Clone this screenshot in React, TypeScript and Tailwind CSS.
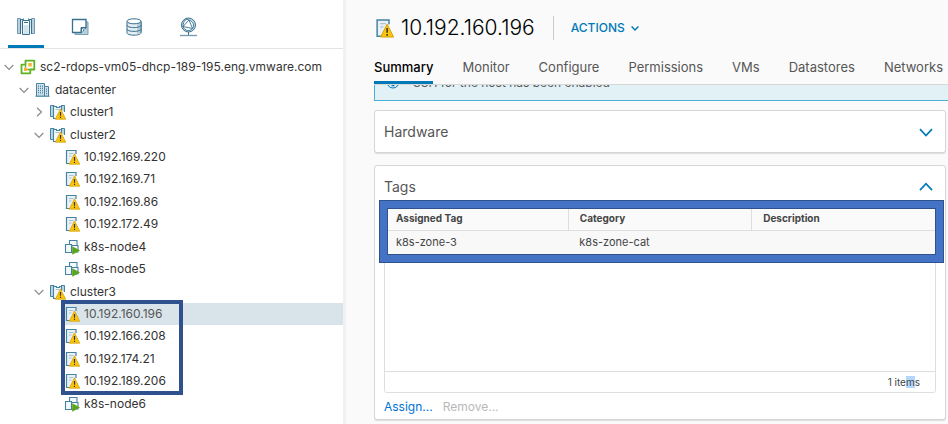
import type { ReactNode } from "react";

const BLUE = "#4583a3";

function Warning() {
  return (
    <g>
      <path d="M10.500 4.900 15.700 15.200H5.300Z" fill="#fdc60a" stroke="#d3a10c" strokeWidth="0.800" strokeLinejoin="round" />
      <path d="M10.500 8v3.700M10.500 12.700v1.400" stroke="#333" strokeWidth="1.200" />
    </g>
  );
}

function HostIcon({ className = "size-4" }: { className?: string }) {
  return (
    <svg viewBox="0 0 16 16" className={`${className} shrink-0`} fill="none" aria-hidden="true">
      <path d="M3 1h9v6l-4 7H3z" fill="#e9f1f5" />
      <path d="M12 5V1.500H2.500v13H6" stroke={BLUE} strokeWidth="1.200" />
      <path d="M5 4.500h4.500M5 7h2.500" stroke="#a9c3d1" />
      <Warning />
    </svg>
  );
}

function ClusterIcon() {
  return (
    <svg viewBox="0 0 16 16" className="size-4 shrink-0" fill="none" aria-hidden="true">
      <path d="M.500 1.500H4v11H.500z" fill="#bcd2dd" stroke={BLUE} />
      <path d="M11 1.500h3.500V8L11 6z" fill="#bcd2dd" />
      <path d="M11 1.500h3.500V8" stroke={BLUE} />
      <path d="M11.500 6V2.500h-2v1h-3v-1h-3v12H6" fill="#f3f8fa" stroke={BLUE} strokeWidth="1.100" />
      <path d="M5.500 5.500h4" stroke="#a9c3d1" />
      <Warning />
    </svg>
  );
}

function VmIcon() {
  return (
    <svg viewBox="0 0 16 16" className="size-4 shrink-0" fill="none" aria-hidden="true">
      <path d="M5.500 1.500h7.500v5.500H5.500z" fill="#f4f8fa" stroke={BLUE} strokeWidth="1.100" />
      <path d="M7.500 6.500h6.500V13H7.500z" fill="#f4f8fa" stroke={BLUE} strokeWidth="1.100" />
      <path d="M1.500 5.500h6v8h-6z" fill="#f4f8fa" stroke={BLUE} strokeWidth="1.100" />
      <path d="M8.200 7.200 16 11.500l-7.800 4.300z" fill="#5ba51b" />
    </svg>
  );
}

function VcenterIcon() {
  return (
    <svg viewBox="0 0 16 16" className="size-4 shrink-0" fill="none" aria-hidden="true">
      <path d="M5.500 1.700h8.800v8.800h-4v3.800H1.500V5.700h4z" fill="#fff" stroke="#5fb320" strokeWidth="1.800" strokeLinejoin="round" />
      <path d="M5.500 5.700v3M10.300 10.500h-3" stroke="#5fb320" strokeWidth="1.300" />
      <path d="M8.300 3.900h3.500v3.500H8.300zM4 8.700h3.300v3.300H4z" fill="#f9b233" />
    </svg>
  );
}

function DatacenterIcon() {
  return (
    <svg viewBox="0 0 16 16" className="size-4 shrink-0" fill="none" aria-hidden="true">
      <path d="M1.500 14V1.500h8V14" fill="#d3e2ea" stroke={BLUE} />
      <path d="M9.500 14V4.500h4V14" fill="#d3e2ea" stroke={BLUE} />
      <path d="M3.500 3.500v9M5.500 3.500v9M7.500 3.500v9" stroke={BLUE} strokeDasharray="1.300 0.900" />
      <path d="M11.500 6.500v6" stroke={BLUE} strokeDasharray="1.300 0.900" />
      <path d="M.500 14.200h14" stroke={BLUE} strokeWidth="1.200" />
    </svg>
  );
}

function Chevron({ dir, className = "", weight = 1.2 }: { dir: "down" | "right" | "up"; className?: string; weight?: number }) {
  const d = dir === "down" ? "M.7 3 5 7.500 9.300 3" : dir === "up" ? "M.7 7.200 5 2.700 9.300 7.200" : "M3 .7 7.500 5 3 9.300";
  return (
    <svg viewBox="0 0 10 10" className={`shrink-0 ${className}`} fill="none" stroke="currentColor" aria-hidden="true">
      <path d={d} strokeWidth={weight} />
    </svg>
  );
}

type Node = { label: string; level: 0 | 1 | 2 | 3; icon: ReactNode; open?: boolean; selected?: boolean };

const host = (label: string, selected = false): Node => ({ label, level: 3, icon: <HostIcon />, selected });
const vm = (label: string): Node => ({ label, level: 3, icon: <VmIcon /> });
const cluster = (label: string, open: boolean): Node => ({ label, level: 2, icon: <ClusterIcon />, open });

const nodes: Node[] = [
  { label: "sc2-rdops-vm05-dhcp-189-195.eng.vmware.com", level: 0, icon: <VcenterIcon />, open: true },
  { label: "datacenter", level: 1, icon: <DatacenterIcon />, open: true },
  cluster("cluster1", false),
  cluster("cluster2", true),
  host("10.192.169.220"),
  host("10.192.169.71"),
  host("10.192.169.86"),
  host("10.192.172.49"),
  vm("k8s-node4"),
  vm("k8s-node5"),
  cluster("cluster3", true),
  host("10.192.160.196", true),
  host("10.192.166.208"),
  host("10.192.174.21"),
  host("10.192.189.206"),
  vm("k8s-node6"),
];

const indent = ["ml-1", "ml-[19px]", "ml-[34px]", "ml-16"];

const views: { label: string; icon: ReactNode }[] = [
  {
    label: "Hosts and clusters",
    icon: (
      <svg viewBox="0 0 20 20" className="size-5 shrink-0" fill="none" stroke="#38708f" aria-hidden="true">
        <path d="M4.500 1.500h-3v15h3zM15.500 1.500h3v15h-3z" fill="#b9cfdb" stroke="#6f9ab1" />
        <path d="M4.500 17V2.500h3v-1M15.500 17V2.500h-3v-1" fill="#dce8ee" />
        <path d="M6.500 3.500h7v14h-7z" fill="#fff" />
        <path d="M8 5.500h4" />
        <path d="M7.500 8h5v9h-5z" fill="#d5e3ea" stroke="none" />
      </svg>
    ),
  },
  {
    label: "VMs and templates",
    icon: (
      <svg viewBox="0 0 20 20" className="size-5 shrink-0" fill="none" stroke="#38708f" aria-hidden="true">
        <path d="M5 15v2.500h13V5h-3" fill="#b9cfdb" stroke="#7a9fb4" />
        <path d="M2.500 2.500h13.500v8l-5 5H2.500z" fill="#fff" strokeWidth="1.300" />
        <path d="M16 10.500h-5v5z" fill="#38708f" />
        <path d="M12.500 14.500v-2.500h2.500" stroke="#fff" />
      </svg>
    ),
  },
  {
    label: "Storage",
    icon: (
      <svg viewBox="0 0 20 20" className="size-5 shrink-0" fill="none" stroke="#38708f" aria-hidden="true">
        <path d="M3 4.500v11.300c0 1.300 3 2.400 7 2.400s7-1.100 7-2.400V4.500" fill="#e3edf2" />
        <path d="M13 6.800v11l4-1.600V5z" fill="#b9cfdb" stroke="none" />
        <ellipse cx="10" cy="4.300" rx="7" ry="2.500" fill="#fff" />
        <path d="M3 8.200c0 1.300 3 2.400 7 2.400s7-1.100 7-2.400M3 12c0 1.300 3 2.400 7 2.400s7-1.100 7-2.400M17 4.500v11.300" />
      </svg>
    ),
  },
  {
    label: "Networking",
    icon: (
      <svg viewBox="0 0 20 20" className="size-5 shrink-0" fill="none" stroke="#38708f" aria-hidden="true">
        <circle cx="10.500" cy="8" r="7" fill="#c8dae3" />
        <path d="M11 3 5 9.500l9.500 2zM11 3C8 1.500 5.500 3 5 9.500M5 9.500c2 5 7 5 9.500 2M14.500 11.500c2-3 1-7-3.500-8.500" fill="#fff" strokeWidth="0.900" />
        <path d="M10.500 15v3" />
        <path d="M2 18.500h17" stroke="#6f9ab1" strokeWidth="1.300" />
      </svg>
    ),
  },
];

const tabs = ["Summary", "Monitor", "Configure", "Permissions", "VMs", "Datastores", "Networks"];

function Sidebar() {
  return (
    <aside className="w-[346px] shrink-0 border-r-3 border-[#f1f1f1] bg-white">
      <nav className="flex h-[49px] gap-[18px] border-b border-[#e4e4e4] pl-2" aria-label="Inventory views">
        {views.map((v, i) => (
          <button
            key={v.label}
            type="button"
            aria-label={v.label}
            className={`flex w-9 justify-center border-b-3 pt-[17px] ${i === 0 ? "border-[#0079b8]" : "border-transparent"}`}
          >
            {v.icon}
          </button>
        ))}
      </nav>
      <div className="relative pt-[7px]">
        <ul className="flex h-[359px] flex-col text-xs">
          {nodes.map((n) => (
            <li
              key={n.label}
              className={`flex flex-1 items-center ${indent[n.level]} ${n.selected ? "bg-[#d9e4ea] text-[#565656]" : "text-[#333]"}`}
            >
              {n.open !== undefined && (
                <button type="button" aria-label={`Toggle ${n.label}`} aria-expanded={n.open} className="mr-1.5 text-[#8c8c8c]">
                  <Chevron dir={n.open ? "down" : "right"} className="size-2.5" />
                </button>
              )}
              <a href="#" className="flex items-center gap-1 whitespace-nowrap">
                {n.icon}
                {n.label}
              </a>
            </li>
          ))}
        </ul>
        <div className="pointer-events-none absolute top-[251px] left-[61px] h-[95px] w-[122px] border-4 border-[#2f528f]" />
      </div>
    </aside>
  );
}

function TagsTable() {
  return (
    <div className="relative mx-[9px] h-[190px] rounded-[3px] border border-[#dedede]">
      <div className="flex h-full flex-col">
        <table className="mt-1 w-full table-fixed border-collapse text-left text-[11px] text-[#454545]">
          <thead>
            <tr className="h-[22px] border-b border-[#dedede] bg-[#fafafa] text-[10px]">
              <th className="border-r border-[#dedede] pl-[11px] font-bold">Assigned Tag</th>
              <th className="border-r border-[#dedede] pl-[11px] font-bold">Category</th>
              <th className="pl-[11px] font-bold">Description</th>
            </tr>
          </thead>
          <tbody>
            <tr className="h-6 bg-[#f8f8f8]">
              <td className="pl-[11px]">k8s-zone-3</td>
              <td className="pl-[11px]">k8s-zone-cat</td>
              <td />
            </tr>
          </tbody>
        </table>
        <div className="mt-auto flex h-[21px] items-center justify-end border-t border-[#dedede] pr-[15px] text-[10px] text-[#454545]">
          <span>
            1 ite<mark className="bg-[#b3d7ff] text-inherit">m</mark>s
          </span>
        </div>
      </div>
      <div className="pointer-events-none absolute -top-1 -right-[9px] -left-[6px] h-[63px] border border-[#2f528f]">
        <div className="h-full border-7 border-[#4472c4]">
          <div className="h-full border border-[#2f528f]" />
        </div>
      </div>
    </div>
  );
}

export default function App() {
  return (
    <div className="flex h-screen min-h-[424px] overflow-hidden bg-[#fafafa] font-[Inter,'Noto_Sans',sans-serif]">
      <Sidebar />
      <main className="flex min-w-0 flex-1 flex-col pl-7">
        <header className="flex h-14 shrink-0 items-center">
          <HostIcon className="size-5" />
          <h1 className="ml-[7px] text-[21px] font-light text-black">10.192.160.196</h1>
          <div className="ml-[18px] h-6 w-px bg-[#ccc]" />
          <button type="button" className="ml-[17px] flex items-center gap-1.5 text-xs font-medium text-[#0079b8]">
            ACTIONS
            <Chevron dir="down" className="size-2" weight={1.8} />
          </button>
        </header>
        <nav className="flex h-[29px] shrink-0 gap-[29px] border-b border-[#d8d8d8] text-[13px] whitespace-nowrap" aria-label="Host">
          {tabs.map((t, i) => (
            <a
              key={t}
              href="#"
              className={`pt-0.5 ${i === 0 ? "border-b-3 border-[#0079b8] font-medium text-black" : "text-[#565656]"}`}
            >
              {t}
            </a>
          ))}
        </nav>
        <div className="min-h-0 flex-1 overflow-hidden">
          <div className="-mt-3 -mr-1 flex h-7 items-start gap-3 border-b border-l border-[#49afd9] bg-[#e1f1f6] pl-2.5 text-xs text-[#565656]">
            <svg viewBox="0 0 16 16" className="size-4" fill="none" stroke="#0079b8" aria-hidden="true">
              <circle cx="8" cy="9" r="6" />
              <path d="M8 8v4.500M6.500 12.500h3" strokeWidth="1.300" />
            </svg>
            <span className="pt-0.5">SSH for the host has been enabled</span>
          </div>
          <div className="flex flex-col gap-3 pt-[9px] pr-0.5">
            <section className="flex h-[43px] items-center justify-between rounded-[3px] border border-[#d5d5d5] bg-white pr-3 pl-[9px] shadow-[0_1px_1px_#ddd]">
              <h2 className="text-sm text-[#565656]">Hardware</h2>
              <button type="button" aria-label="Expand Hardware" className="text-[#0079b8]">
                <Chevron dir="down" className="size-3.5" />
              </button>
            </section>
            <section className="rounded-[3px] border border-[#d5d5d5] bg-white shadow-[0_1px_1px_#ddd]">
              <div className="flex h-[37px] items-center justify-between pt-1 pr-3 pl-[9px]">
                <h2 className="text-sm text-[#565656]">Tags</h2>
                <button type="button" aria-label="Collapse Tags" className="text-[#0079b8]">
                  <Chevron dir="up" className="size-3.5" />
                </button>
              </div>
              <TagsTable />
              <div className="flex h-[26px] items-center gap-2.5 pt-0.5 pl-[9px] text-xs">
                <button type="button" className="text-[#0072d6]">
                  Assign...
                </button>
                <button type="button" disabled className="text-[#b8b8b8]">
                  Remove...
                </button>
              </div>
            </section>
          </div>
        </div>
      </main>
    </div>
  );
}
